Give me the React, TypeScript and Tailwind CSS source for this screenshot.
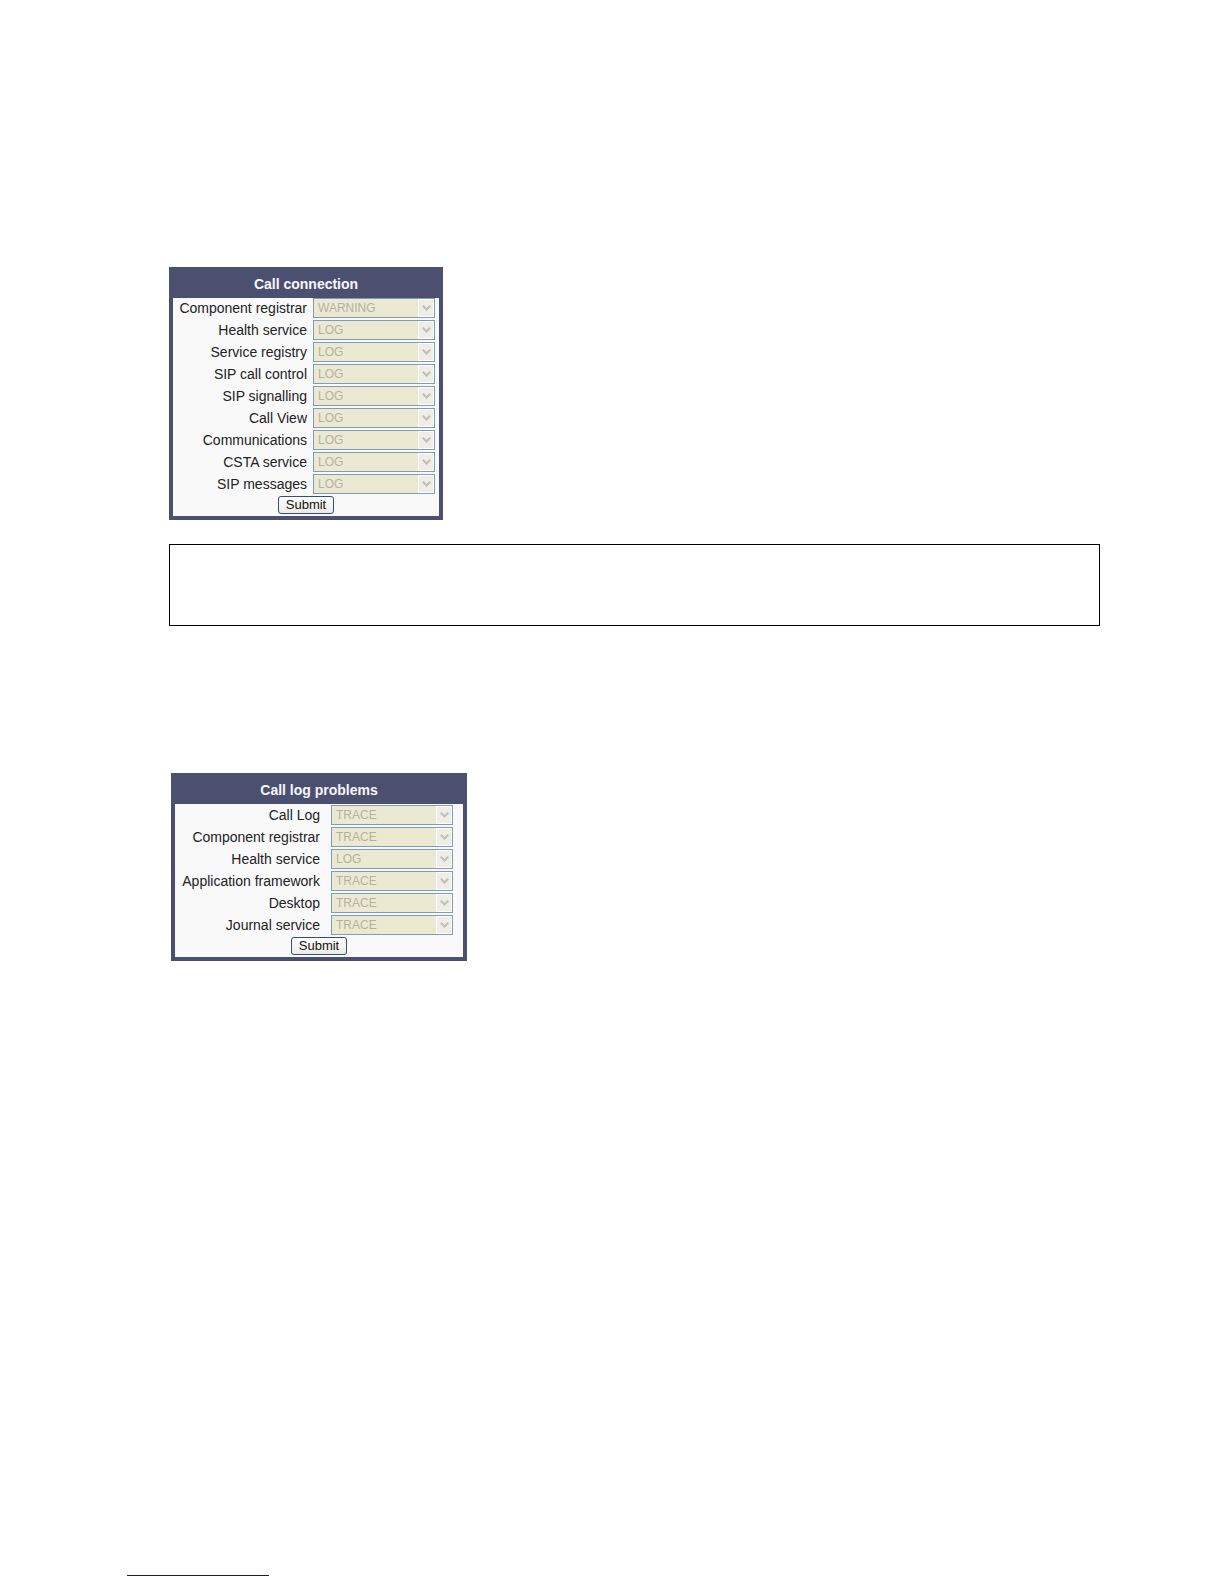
import React from "react";

type Row = { label: string; value: string };

const callConnection: Row[] = [
  { label: "Component registrar", value: "WARNING" },
  { label: "Health service", value: "LOG" },
  { label: "Service registry", value: "LOG" },
  { label: "SIP call control", value: "LOG" },
  { label: "SIP signalling", value: "LOG" },
  { label: "Call View", value: "LOG" },
  { label: "Communications", value: "LOG" },
  { label: "CSTA service", value: "LOG" },
  { label: "SIP messages", value: "LOG" },
];

const callLogProblems: Row[] = [
  { label: "Call Log", value: "TRACE" },
  { label: "Component registrar", value: "TRACE" },
  { label: "Health service", value: "LOG" },
  { label: "Application framework", value: "TRACE" },
  { label: "Desktop", value: "TRACE" },
  { label: "Journal service", value: "TRACE" },
];

function LevelSelect({ id, value }: { id: string; value: string }) {
  return (
    <div className="relative h-5 w-[122px]">
      <select
        id={id}
        disabled
        defaultValue={value}
        className="block h-5 w-full appearance-none rounded-none border border-[#7f9db9] bg-[#ece9d3] pl-1 text-xs leading-[18px] text-[#b5b19c] opacity-100"
      >
        <option>LOG</option>
        <option>TRACE</option>
        <option>WARNING</option>
      </select>
      <span className="pointer-events-none absolute top-px right-px flex h-[18px] w-4 items-center justify-center border border-white bg-[#efeee6]">
        <svg width="9" height="8" viewBox="0 0 9 8" fill="none" stroke="#c0bfb2" strokeWidth="2">
          <path d="M0.8 1.8 4.5 5.5 8.2 1.8" />
        </svg>
      </span>
    </div>
  );
}

function LogPanel({
  id,
  title,
  rows,
  className,
  bodyClass,
  gridClass,
}: {
  id: string;
  title: string;
  rows: Row[];
  className: string;
  bodyClass: string;
  gridClass: string;
}) {
  return (
    <form className={`border-4 border-t-0 border-[#4b4f70] bg-[#f9f9fa] ${className}`} onSubmit={(e) => e.preventDefault()}>
      <h2 className="-mx-1 bg-[#4b4f70] pt-1 text-center text-sm leading-[27px] font-bold text-[#f8f8fc]">
        {title}
      </h2>
      <div className={`pb-0.5 ${bodyClass}`}>
        <div className={`grid justify-end gap-y-0.5 ${gridClass}`}>
          {rows.map((row, i) => (
            <React.Fragment key={row.label}>
              <label htmlFor={`${id}-${i}`} className="text-right text-sm leading-[21px] h-5 whitespace-nowrap text-[#222222]">
                {row.label}
              </label>
              <LevelSelect id={`${id}-${i}`} value={row.value} />
            </React.Fragment>
          ))}
        </div>
        <div className="mt-0.5 flex justify-center">
          <button
            type="submit"
            className="h-[18px] w-14 rounded-[3px] border border-[#2f4f80] bg-linear-to-b from-white to-[#ecebe5] text-[13px] leading-4 text-[#111111]"
          >
            Submit
          </button>
        </div>
      </div>
    </form>
  );
}

export default function App() {
  return (
    <main className="flex min-h-screen flex-col bg-white pt-[267px] pb-2 font-['Liberation_Sans',Arial,sans-serif]">
      <div className="mr-[124px] ml-[169px]">
        <LogPanel
          id="connection"
          title="Call connection"
          rows={callConnection}
          className="w-[274px]"
          bodyClass="pt-0"
          gridClass="grid-cols-[auto_122px] gap-x-1.5 pr-1"
        />
        <section className="mt-6 h-[82px] border border-black" />
        <LogPanel
          id="log"
          title="Call log problems"
          rows={callLogProblems}
          className="mt-[147px] ml-0.5 w-[296px]"
          bodyClass="pt-px"
          gridClass="grid-cols-[auto_122px] gap-x-[11px] pr-2.5"
        />
      </div>
      <footer className="mt-auto ml-[127px] w-[142px] border-b border-[#15157a]" />
    </main>
  );
}
